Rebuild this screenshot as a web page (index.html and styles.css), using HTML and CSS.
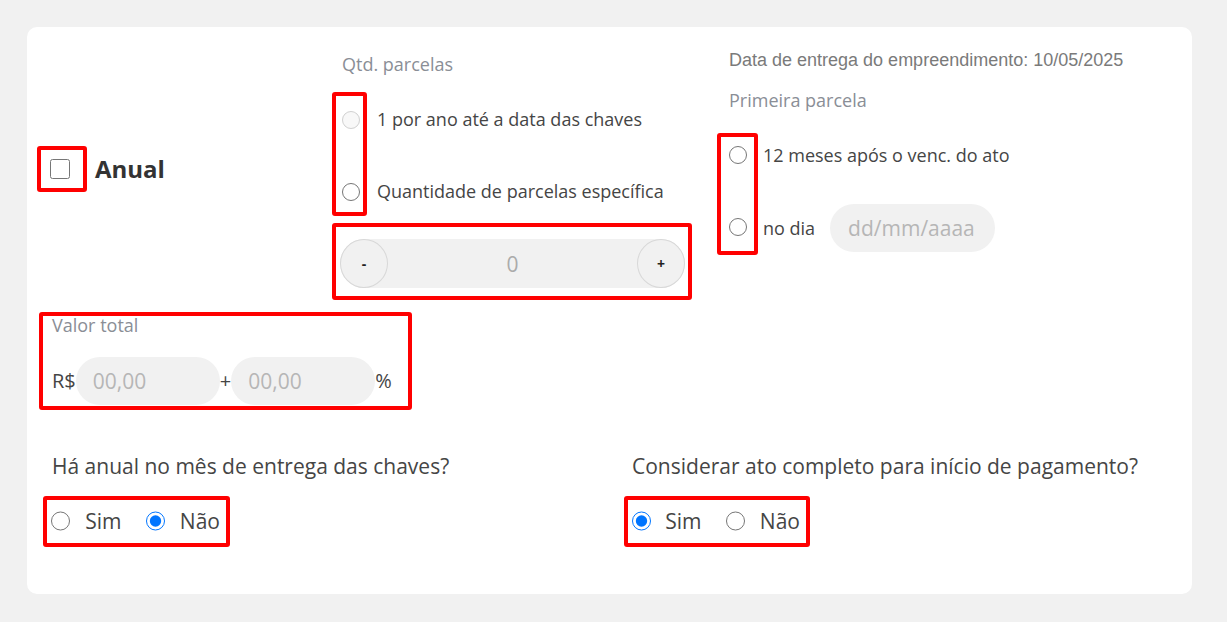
FILE: index.html
```html
<!DOCTYPE html>
<html lang="pt-BR">
<head>
<meta charset="utf-8">
<title>Anual</title>
<link rel="stylesheet" href="styles.css">
</head>
<body>
<div class="card">
  <div class="top">
    <div class="col-anual">
      <div class="anual">
        <span class="mark chk-box"><input type="checkbox" class="chk"></span>
        <span class="anual-text">Anual</span>
      </div>
    </div>

    <div class="col-qtd">
      <div class="label">Qtd. parcelas</div>
      <div class="opts">
        <div class="mark radios radios-qtd">
          <input type="radio" name="qtd" class="r18" disabled>
          <input type="radio" name="qtd" class="r18">
        </div>
        <div class="opt-labels opt-labels-qtd">
          <span class="opt">1 por ano até a data das chaves</span>
          <span class="opt">Quantidade de parcelas específica</span>
        </div>
      </div>
      <div class="mark stepper-box">
        <div class="stepper">
          <button class="step" type="button">-</button>
          <span class="step-val">0</span>
          <button class="step" type="button">+</button>
        </div>
      </div>
    </div>

    <div class="col-first">
      <div class="entrega">Data de entrega do empreendimento: 10/05/2025</div>
      <div class="label label-first">Primeira parcela</div>
      <div class="opts opts-first">
        <div class="mark radios radios-first">
          <input type="radio" name="first" class="r18">
          <input type="radio" name="first" class="r18">
        </div>
        <div class="opt-labels opt-labels-first">
          <span class="opt">12 meses após o venc. do ato</span>
          <div class="opt-row">
            <span class="opt">no dia</span>
            <input type="text" class="field field-date" placeholder="dd/mm/aaaa">
          </div>
        </div>
      </div>
    </div>
  </div>

  <div class="mark valor">
    <div class="label label-valor">Valor total</div>
    <div class="valor-row">
      <span class="unit">R$</span>
      <input type="text" class="field field-num" placeholder="00,00">
      <span class="unit">+</span>
      <input type="text" class="field field-num" placeholder="00,00">
      <span class="unit">%</span>
    </div>
  </div>

  <div class="bottom">
    <div class="question q1">
      <div class="q-text">Há anual no mês de entrega das chaves?</div>
      <div class="mark yesno yesno-1">
        <input type="radio" name="q1" class="r20">
        <span class="yn">Sim</span>
        <input type="radio" name="q1" class="r20 second" checked>
        <span class="yn">Não</span>
      </div>
    </div>
    <div class="question q2">
      <div class="q-text">Considerar ato completo para início de pagamento?</div>
      <div class="mark yesno yesno-2">
        <input type="radio" name="q2" class="r20" checked>
        <span class="yn">Sim</span>
        <input type="radio" name="q2" class="r20 second">
        <span class="yn">Não</span>
      </div>
    </div>
  </div>
</div>
</body>
</html>
```

FILE: styles.css
```css
* { box-sizing: border-box; }

body {
  margin: 0;
  padding: 27px 35px 28px 27px;
  background: #f1f1f1;
  font-family: "Open Sans", "Liberation Sans", sans-serif;
  color: #454545;
}

.card {
  background: #ffffff;
  border-radius: 10px;
  padding: 0 10px 47px 10px;
}

.mark {
  border: 4px solid #ff0000;
  border-radius: 3px;
}

.top {
  display: grid;
  grid-template-columns: 295px 385px 1fr;
}

/* left column */
.col-anual { padding-top: 119px; }

.anual {
  display: flex;
  align-items: center;
}

.chk-box {
  display: inline-flex;
  padding: 9px 13px 9px 9px;
}

.chk {
  width: 20px;
  height: 20px;
  margin: 0;
}

.anual-text {
  margin-left: 8px;
  font-size: 24px;
  font-weight: 700;
  line-height: 30px;
  color: #333333;
}

/* labels */
.label {
  font-size: 18px;
  line-height: 24px;
  color: #8a8e96;
}

.opt {
  font-size: 18px;
  line-height: 18px;
  color: #454545;
  white-space: nowrap;
}

/* middle column */
.col-qtd { padding-top: 25px; }
.col-qtd .label { padding-left: 10px; }

.opts {
  display: flex;
  margin-top: 16px;
}

.radios {
  display: flex;
  flex-direction: column;
}

.r18 {
  width: 18px;
  height: 18px;
  margin: 0;
}

.radios-qtd {
  width: 35px;
  height: 124px;
  padding: 15px 0 0 6px;
  gap: 54px;
}

.opt-labels {
  display: flex;
  flex-direction: column;
}

.opt-labels-qtd {
  margin-left: 10px;
  padding-top: 18px;
  gap: 54px;
}

.stepper-box {
  width: 360px;
  height: 77px;
  margin-top: 7px;
  padding: 12px 3px 8px 4px;
}

.stepper {
  display: flex;
  align-items: center;
  width: 345px;
  height: 49px;
  background: #f1f1f1;
  border-radius: 25px;
}

.step {
  width: 48px;
  height: 49px;
  padding: 0;
  border: 1px solid #d8d8d8;
  border-radius: 50%;
  background: #f1f1f1;
  font-family: "Open Sans", sans-serif;
  font-size: 14px;
  font-weight: 700;
  color: #222222;
}

.step-val {
  flex: 1;
  text-align: center;
  font-size: 21px;
  color: #ababab;
}

/* right column */
.col-first { padding-top: 21px; }

.entrega {
  padding-left: 12px;
  font-family: "Liberation Sans", Arial, sans-serif;
  font-size: 18px;
  line-height: 24px;
  color: #7a7a7a;
}

.label-first {
  margin-top: 16px;
  padding-left: 12px;
}

.opts-first { margin-top: 21px; }

.radios-first {
  width: 41px;
  height: 122px;
  padding: 9px 0 0 8px;
  gap: 54px;
}

.opt-labels-first {
  margin-left: 5px;
  padding-top: 13px;
  gap: 40px;
}

.opt-row {
  display: flex;
  align-items: center;
  height: 48px;
  gap: 15px;
}

.field {
  height: 48px;
  border: none;
  border-radius: 24px;
  background: #f1f1f1;
  font-family: "Open Sans", sans-serif;
  font-size: 21px;
  color: #454545;
  outline: none;
}

.field::placeholder { color: #b6b6b6; }

.field-date {
  width: 165px;
  padding: 0 0 0 18px;
}

/* valor total */
.valor {
  width: 373px;
  height: 98px;
  margin: 12px 0 0 2px;
  padding: 0 0 0 9px;
}

.label-valor {
  line-height: 18px;
}

.valor-row {
  display: flex;
  align-items: center;
  margin-top: 23px;
}

.unit {
  font-size: 20px;
  line-height: 28px;
  color: #454545;
}

.field-num {
  width: 144px;
  padding: 0 0 0 17px;
}

/* bottom */
.bottom {
  display: grid;
  grid-template-columns: 587px 1fr;
  margin-top: 42px;
}

.q1 { padding-left: 6px; }

.q-text {
  font-size: 21px;
  line-height: 28px;
  color: #454545;
  white-space: nowrap;
}

.q1 .q-text { padding-left: 9px; }
.q2 .q-text { padding-left: 8px; }

.yesno {
  display: inline-flex;
  align-items: center;
  height: 51px;
  margin-top: 16px;
  padding: 0 6px 2px 4px;
}

.yesno-1 { width: 187px; }
.yesno-2 { width: 186px; }

.r20 {
  width: 20px;
  height: 20px;
  margin: 0 15px 0 0;
}

.yesno-2 .r20 { margin-right: 14px; }
.r20.second { margin-left: 24px; margin-right: 15px; }

.yn {
  font-size: 21px;
  line-height: 28px;
  color: #454545;
}
```
